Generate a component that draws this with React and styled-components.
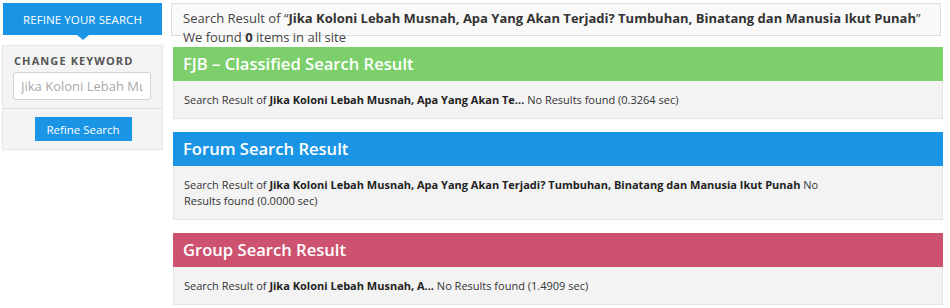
import React from "react";
import styled, { createGlobalStyle } from "styled-components";

const Global = createGlobalStyle`
  html, body { margin: 0; padding: 0; background: #fff; }
  body { font-family: "Open Sans", "Noto Sans", sans-serif; color: #333; }
  * { box-sizing: border-box; }
`;

const Page = styled.div`
  display: flex;
  align-items: flex-start;
  gap: 8px;
  padding: 3px 7px 0 2px;
  width: 950px;
`;

const Sidebar = styled.aside`
  width: 161px;
  flex: none;
  display: flex;
  flex-direction: column;
`;

const SideHeader = styled.div`
  position: relative;
  margin: 0 1px;
  height: 32px;
  background: #1a95e6;
  color: #fff;
  font-size: 11.5px;
  text-transform: uppercase;
  display: flex;
  align-items: center;
  justify-content: center;
  letter-spacing: 0.1px;
  &::after {
    content: "";
    position: absolute;
    left: 50%;
    bottom: -5px;
    margin-left: -6px;
    border-left: 6px solid transparent;
    border-right: 6px solid transparent;
    border-top: 5px solid #1a95e6;
  }
`;

const SidePanel = styled.div`
  margin-top: 10px;
  background: #f4f4f4;
  border: 1px solid #e6e6e6;
  height: 105px;
`;

const SideSection = styled.div`
  padding: 7px 10px 8px 10px;
  border-bottom: 1px solid #dedede;
`;

const Label = styled.div`
  font-size: 11px;
  font-weight: 700;
  letter-spacing: 1.1px;
  color: #555;
  text-transform: uppercase;
  line-height: 16px;
  margin-left: 1px;
`;

const Input = styled.input`
  display: block;
  margin-top: 3px;
  width: 138px;
  height: 28px;
  border: 1px solid #d2d2d2;
  border-radius: 3px;
  background: #fff;
  padding: 0 7px;
  font-family: "Open Sans", sans-serif;
  font-size: 13px;
  color: #999;
  outline: none;
  &::placeholder { color: #aaa; }
`;

const ButtonRow = styled.div`
  display: flex;
  justify-content: center;
  padding-top: 8px;
`;

const Button = styled.button`
  width: 97px;
  height: 24px;
  border: none;
  background: #1a95e6;
  color: #fff;
  font-family: "Open Sans", sans-serif;
  font-size: 11.5px;
  padding: 0;
  margin-left: 1px;
`;

const Main = styled.main`
  flex: 1;
  display: flex;
  flex-direction: column;
`;

const SummaryBox = styled.div`
  height: 33px;
  border: 1px solid #dedede;
  background: #f9f9f9;
  padding: 5px 11px 0;
  margin-right: 2px;
  font-size: 13px;
  line-height: 19px;
  color: #444;
  margin-bottom: 11px;
  white-space: nowrap;
  b { color: #333; }
`;

const Card = styled.section`
  margin: 0 0 13px 2px;
`;

const CardHeader = styled.h2`
  margin: 0;
  height: 34px;
  background: ${(p) => p.$color};
  color: #fff;
  font-size: 16.6px;
  font-weight: 600;
  line-height: 34px;
  padding: 0 10px;
`;

const CardBody = styled.div`
  background: #f3f3f3;
  border: 1px solid #e4e4e4;
  border-top: none;
  padding: 11px 10px 10px;
  font-size: 11px;
  line-height: 16px;
  color: #333;
  b { color: #222; font-weight: 700; }
`;

const BodyText = styled.p`
  margin: 0;
  max-width: 650px;
`;

const results = [
  {
    title: "FJB – Classified Search Result",
    color: "#7ccf6a",
    q: "Jika Koloni Lebah Musnah, Apa Yang Akan Te...",
    time: "0.3264",
  },
  {
    title: "Forum Search Result",
    color: "#1a95e6",
    q: "Jika Koloni Lebah Musnah, Apa Yang Akan Terjadi? Tumbuhan, Binatang dan Manusia Ikut Punah",
    time: "0.0000",
  },
  {
    title: "Group Search Result",
    color: "#cd5270",
    q: "Jika Koloni Lebah Musnah, A...",
    time: "1.4909",
  },
];

export default function App() {
  return (
    <>
      <Global />
      <Page>
        <Sidebar>
          <SideHeader>Refine Your Search</SideHeader>
          <SidePanel>
            <SideSection>
              <Label>Change Keyword</Label>
              <Input placeholder="Jika Koloni Lebah Musnah, Apa Yang Akan Terjadi" />
            </SideSection>
            <ButtonRow>
              <Button>Refine Search</Button>
            </ButtonRow>
          </SidePanel>
        </Sidebar>
        <Main>
          <SummaryBox>
            Search Result of “<b>Jika Koloni Lebah Musnah, Apa Yang Akan Terjadi? Tumbuhan, Binatang dan Manusia Ikut Punah</b>”
            <br />
            We found <b>0</b> items in all site
          </SummaryBox>
          {results.map((r) => (
            <Card key={r.title}>
              <CardHeader $color={r.color}>{r.title}</CardHeader>
              <CardBody>
                <BodyText>
                  Search Result of <b>{r.q}</b> No Results found ({r.time} sec)
                </BodyText>
              </CardBody>
            </Card>
          ))}
        </Main>
      </Page>
    </>
  );
}
